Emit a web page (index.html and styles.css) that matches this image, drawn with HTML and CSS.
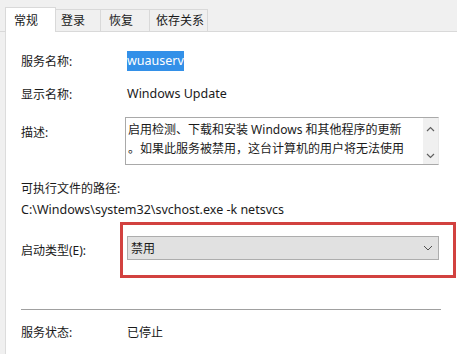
FILE: index.html
```html
<!DOCTYPE html>
<html>

<head>
    <title>wuauserv 属性</title>
    <link rel="stylesheet" href="styles.css">
</head>

<body>
    <div class="window">
        <div class="tabs">
            <div class="tab active">常规</div>
            <div class="tab login">登录</div>
            <div class="tab recover">恢复</div>
            <div class="tab deps">依存关系</div>
        </div>
        <div class="panel">
            <div class="row first">
                <span class="label">服务名称:</span>
                <span><span class="selected">wuauserv</span></span>
            </div>
            <div class="row">
                <span class="label">显示名称:</span>
                <span class="latin">Windows Update</span>
            </div>
            <div class="row desc-row">
                <span class="label">描述:</span>
                <div class="desc">
                    <div class="desc-text">
                        <div>启用检测、下载和安装 Windows 和其他程序的更新</div>
                        <div>。如果此服务被禁用，这台计算机的用户将无法使用</div>
                    </div>
                    <div class="scroll">
                        <svg width="9" height="6" viewBox="0 0 9 6"><path d="M1 5 L4.5 1.5 L8 5" fill="none" stroke="#606060" stroke-width="1.2"/></svg>
                        <svg width="9" height="6" viewBox="0 0 9 6"><path d="M1 1 L4.5 4.5 L8 1" fill="none" stroke="#606060" stroke-width="1.2"/></svg>
                    </div>
                </div>
            </div>
            <div class="path-label">可执行文件的路径:</div>
            <div class="path">C:\Windows\system32\svchost.exe -k netsvcs</div>
            <div class="row start-row">
                <span class="label">启动类型(E):</span>
                <div class="highlight">
                    <div class="select">
                        <span>禁用</span>
                        <svg width="10" height="6" viewBox="0 0 10 6"><path d="M1 1 L5 5 L9 1" fill="none" stroke="#505050" stroke-width="1"/></svg>
                    </div>
                </div>
            </div>
            <div class="separator"></div>
            <div class="row status">
                <span class="label">服务状态:</span>
                <span>已停止</span>
            </div>
        </div>
    </div>
</body>

</html>
```

FILE: styles.css
```css
body {
    margin: 0;
    background-color: white;
    font-family: "Noto Sans", "Noto Sans CJK SC", sans-serif;
    font-size: 12px;
    color: #1a1a1a;
}

.window {
    width: 457px;
    height: 354px;
    background-color: #f0f0f0;
    display: flex;
    flex-direction: column;
    overflow: hidden;
}

.tabs {
    display: flex;
    padding: 7px 0 0 5px;
    height: 24px;
    border-bottom: 1px solid #d9d9d9;
}

/* fixed tab widths, measured from the dialog */
.tab {
    box-sizing: border-box;
    height: 22px;
    line-height: 22px;
    white-space: nowrap;
    border: 1px solid #d9d9d9;
    border-left: none;
    border-bottom: none;
    font-size: 12px;
    margin-top: 2px;
}

.tab.active {
    width: 51px;
    padding-left: 8px;
    background-color: white;
    border-left: 1px solid #d9d9d9;
    margin-top: 0;
    height: 25px;
    line-height: 25px;
    margin-bottom: -1px;
}

.tab.login {
    width: 45px;
    padding-left: 5px;
}

.tab.recover {
    width: 49px;
    padding-left: 8px;
}

.tab.deps {
    width: 58px;
    padding-left: 6px;
}

.panel {
    flex: 1;
    margin-left: 5px;
    background-color: white;
    border-left: 1px solid #dcdcdc;
    padding: 0 18px 0 15px;
}

.row {
    display: grid;
    grid-template-columns: 106px 1fr;
    align-items: center;
    height: 33px;
}

.row.first {
    margin-top: 12px;
}

.selected {
    background-color: #3390e8;
    color: white;
    padding: 1px 0 2px;
    font-size: 12.5px;
}

.latin {
    font-size: 12.5px;
}

.desc-row {
    height: 48px;
    margin-top: 7px;
}

.desc-row .label {
    align-self: start;
    margin-top: 6px;
}

.desc {
    display: flex;
    height: 46px;
    border: 1px solid #a9a9a9;
    border-right-color: #e8e8e8;
    margin-left: -2px;
}

.desc-text {
    flex: 1;
    padding: 2px 4px 0 2px;
    line-height: 19px;
    white-space: nowrap;
    overflow: hidden;
}

.scroll {
    width: 15px;
    background-color: #f0f0f0;
    display: flex;
    flex-direction: column;
    justify-content: space-between;
    align-items: center;
    padding: 8px 0 5px;
}

.path-label {
    margin-top: 13px;
    height: 21px;
    line-height: 21px;
}

.path {
    height: 22px;
    line-height: 22px;
    font-size: 12.5px;
}

.start-row {
    height: 56px;
    margin-top: 1px;
}

.highlight {
    border: 3px solid #d2413f;
    margin-left: -7px;
    margin-right: -17px;
    padding: 11px 14px 15px 4px;
}

.select {
    height: 22px;
    background-color: #e1e1e1;
    border: 1px solid #adadad;
    display: flex;
    align-items: center;
    justify-content: space-between;
    padding: 0 5px 0 3px;
}

.separator {
    border-top: 1px solid #a0a0a0;
    margin: 31px 0 0 0;
    width: 420px;
}

.row.status {
    margin-top: 5px;
}
```
